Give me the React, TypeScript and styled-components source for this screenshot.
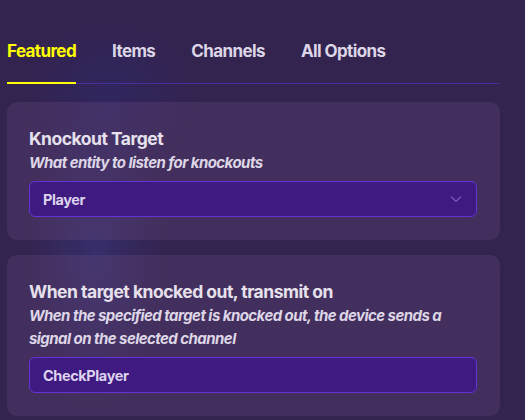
import styled, { createGlobalStyle } from "styled-components";

const GlobalStyle = createGlobalStyle`
  html, body {
    margin: 0;
    padding: 0;
    height: 100%;
  }
  body {
    background: #33234f;
    font-family: Inter, "Liberation Sans", sans-serif;
    overflow: hidden;
  }
`;

const Page = styled.div`
  width: 525px;
  height: 420px;
  box-sizing: border-box;
  padding: 40px 25px 0 7px;
  background:
    radial-gradient(ellipse 70px 160px at 95px 250px, rgba(60, 60, 140, 0.45), transparent 100%),
    radial-gradient(ellipse 90px 80px at 110px 95px, rgba(45, 40, 110, 0.5), transparent 100%),
    #33234f;
  display: flex;
  flex-direction: column;
`;

const TabBar = styled.div`
  display: flex;
  gap: 36px;
  border-bottom: 1px solid #4b2a9c;
`;

const Tab = styled.div<{ $active?: boolean }>`
  font-size: 17px;
  font-weight: 700;
  letter-spacing: -0.6px;
  line-height: 22px;
  padding-bottom: 20px;
  margin-bottom: -1px;
  color: ${(p) => (p.$active ? "#ffff00" : "#dcd6e6")};
  border-bottom: 2px solid ${(p) => (p.$active ? "#ffff00" : "transparent")};
`;

const Cards = styled.div`
  display: flex;
  flex-direction: column;
  gap: 15px;
  margin-top: 18px;
`;

const Card = styled.div`
  background: rgba(110, 80, 130, 0.28);
  border-radius: 10px;
  padding: 25px 23px 23px 22px;
  display: flex;
  flex-direction: column;
`;

const Title = styled.div`
  font-size: 17.5px;
  font-weight: 700;
  letter-spacing: -0.5px;
  color: #e6e1ec;
  line-height: 24px;
`;

const Hint = styled.div`
  font-size: 15px;
  font-weight: 700;
  font-style: italic;
  letter-spacing: -0.55px;
  color: #ddd6e6;
  line-height: 23px;
  margin-bottom: 7px;
`;

const Field = styled.div`
  height: 36px;
  box-sizing: border-box;
  background: #3f1a80;
  border: 1px solid #6433d4;
  border-radius: 6px;
  padding: 0 14px 0 13px;
  display: flex;
  align-items: center;
  justify-content: space-between;
  font-size: 14.5px;
  font-weight: 700;
  letter-spacing: -0.4px;
  color: #ddd3ee;
`;

const Chevron = () => (
  <svg width="12" height="8" viewBox="0 0 12 8">
    <path d="M1 1.5 L6 6.5 L11 1.5" fill="none" stroke="#7a5cc4" strokeWidth="1.2" />
  </svg>
);

export default function App() {
  return (
    <>
      <GlobalStyle />
      <Page>
        <TabBar>
          <Tab $active>Featured</Tab>
          <Tab>Items</Tab>
          <Tab>Channels</Tab>
          <Tab>All Options</Tab>
        </TabBar>
        <Cards>
          <Card>
            <Title>Knockout Target</Title>
            <Hint>What entity to listen for knockouts</Hint>
            <Field>
              <span>Player</span>
              <Chevron />
            </Field>
          </Card>
          <Card>
            <Title>When target knocked out, transmit on</Title>
            <Hint>
              When the specified target is knocked out, the device sends a signal on the
              selected channel
            </Hint>
            <Field>
              <span>CheckPlayer</span>
            </Field>
          </Card>
        </Cards>
      </Page>
    </>
  );
}
